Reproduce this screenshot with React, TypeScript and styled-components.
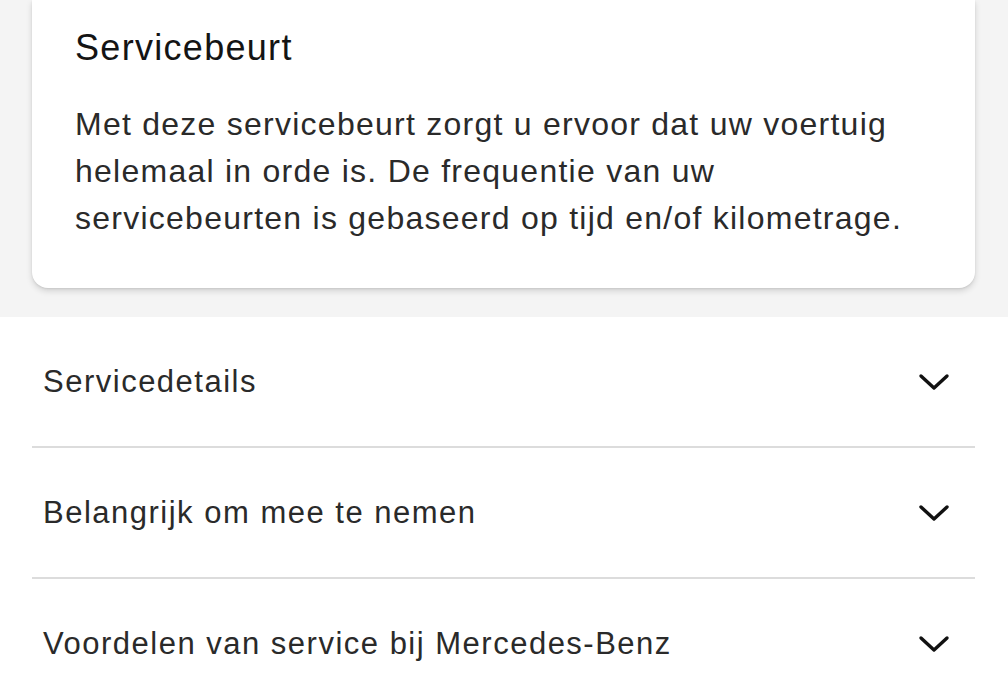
import React from "react";
import styled, { createGlobalStyle } from "styled-components";

const Global = createGlobalStyle`
  html, body { margin: 0; padding: 0; background: #ffffff; }
  body { font-family: "Liberation Sans", Arial, sans-serif; color: #1f1f1f; -webkit-font-smoothing: antialiased; }
  * { box-sizing: border-box; }
`;

const Page = styled.div`
  width: 1008px;
  height: 684px;
  overflow: hidden;
  display: flex;
  flex-direction: column;
  background: #ffffff;
`;

const GraySection = styled.section`
  background: #f4f4f4;
  padding: 0 33px 29px 32px;
`;

const Card = styled.article`
  background: #ffffff;
  border-radius: 0 0 16px 16px;
  box-shadow: 0 3px 6px rgba(0, 0, 0, 0.14), 0 1px 2px rgba(0, 0, 0, 0.08);
  padding: 26px 43px 46px 43px;
`;

const CardTitle = styled.h2`
  margin: 0 0 31px 0;
  font-size: 36px;
  line-height: 44px;
  font-weight: 400;
  letter-spacing: 1.3px;
  color: #141414;
`;

const CardBody = styled.p`
  margin: 0;
  font-size: 32px;
  line-height: 47px;
  letter-spacing: 1.25px;
  color: #2a2a2a;
`;

const List = styled.div`
  margin: 0 33px 0 32px;
  display: flex;
  flex-direction: column;
`;

const Row = styled.div`
  height: 131px;
  display: flex;
  align-items: center;
  justify-content: space-between;
  padding: 0 25px 0 11px;
  border-bottom: 2px solid #dcdcdc;
`;

const RowLabel = styled.span`
  font-size: 31px;
  letter-spacing: 1.5px;
  color: #2a2a2a;
`;

const Chevron = styled.svg`
  width: 32px;
  height: 20px;
  flex: none;
`;

const ChevronIcon = () => (
  <Chevron viewBox="0 0 32 20" fill="none">
    <path d="M3 4 L16 16 L29 4" stroke="#111" strokeWidth="3.4" strokeLinecap="round" strokeLinejoin="round" />
  </Chevron>
);

const items = [
  "Servicedetails",
  "Belangrijk om mee te nemen",
  "Voordelen van service bij Mercedes-Benz",
];

export default function App() {
  return (
    <>
      <Global />
      <Page>
        <GraySection>
          <Card>
            <CardTitle>Servicebeurt</CardTitle>
            <CardBody>
              Met deze servicebeurt zorgt u ervoor dat uw voertuig
              <br />
              helemaal in orde is. De frequentie van uw
              <br />
              servicebeurten is gebaseerd op tijd en/of kilometrage.
            </CardBody>
          </Card>
        </GraySection>
        <List>
          {items.map((t) => (
            <Row key={t}>
              <RowLabel>{t}</RowLabel>
              <ChevronIcon />
            </Row>
          ))}
        </List>
      </Page>
    </>
  );
}
